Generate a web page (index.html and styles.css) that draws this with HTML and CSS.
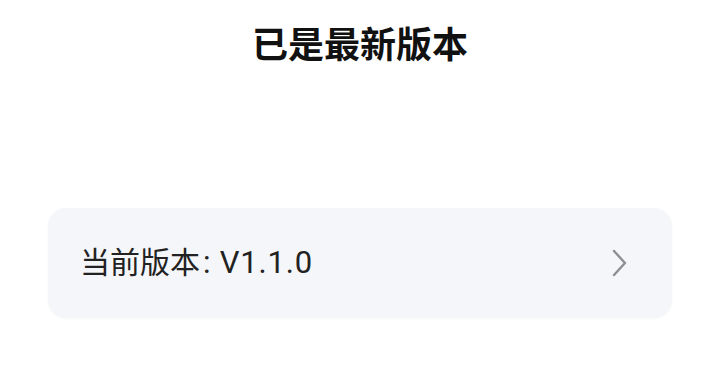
FILE: index.html
```html
<!DOCTYPE html>
<html lang="zh-CN">

<head>
  <meta charset="UTF-8" />
  <meta name="viewport" content="width=device-width, initial-scale=1.0" />
  <title>版本更新</title>
  <link rel="stylesheet" href="styles.css">
</head>

<body>
  <div class="update-page">
    <h1 class="update-title">已是最新版本</h1>

    <!-- Version row -->
    <div class="version-card">
      <span class="version-text">当前版本<span class="version-num">: V1.1.0</span></span>
      <svg class="version-arrow" width="20" height="30" viewBox="0 0 20 30">
        <path d="M4 3 L15 15 L4 27" fill="none" stroke="#8e8e93" stroke-width="2.4" stroke-linecap="round" stroke-linejoin="round" />
      </svg>
    </div>
  </div>
</body>

</html>
```

FILE: styles.css
```css
body {
  margin: 0;
  background-color: #ffffff;
  font-family: Roboto, "Noto Sans CJK SC", sans-serif;
  color: #1c1c1e;
}

.update-page {
  width: 720px;
  height: 380px;
  padding-top: 16px;
  box-sizing: border-box;
}

.update-title {
  margin: 0;
  text-align: center;
  font-family: "Noto Sans CJK SC", sans-serif;
  font-size: 36px;
  font-weight: 700;
  line-height: 52px;
  color: #111111;
}

.version-card {
  display: flex;
  align-items: center;
  justify-content: space-between;
  margin: 140px 48px 0 48px;
  height: 110px;
  padding: 0 42px 0 32px;
  background-color: #f5f6f9;
  border-radius: 18px;
  box-shadow: 0 1px 3px rgba(0, 0, 0, 0.03);
}

.version-text {
  font-size: 30px;
  line-height: 40px;
  color: #222222;
}

.version-num {
  font-size: 31px;
  letter-spacing: 0.8px;
  padding-left: 3px;
}

.version-arrow {
  display: block;
}
```
